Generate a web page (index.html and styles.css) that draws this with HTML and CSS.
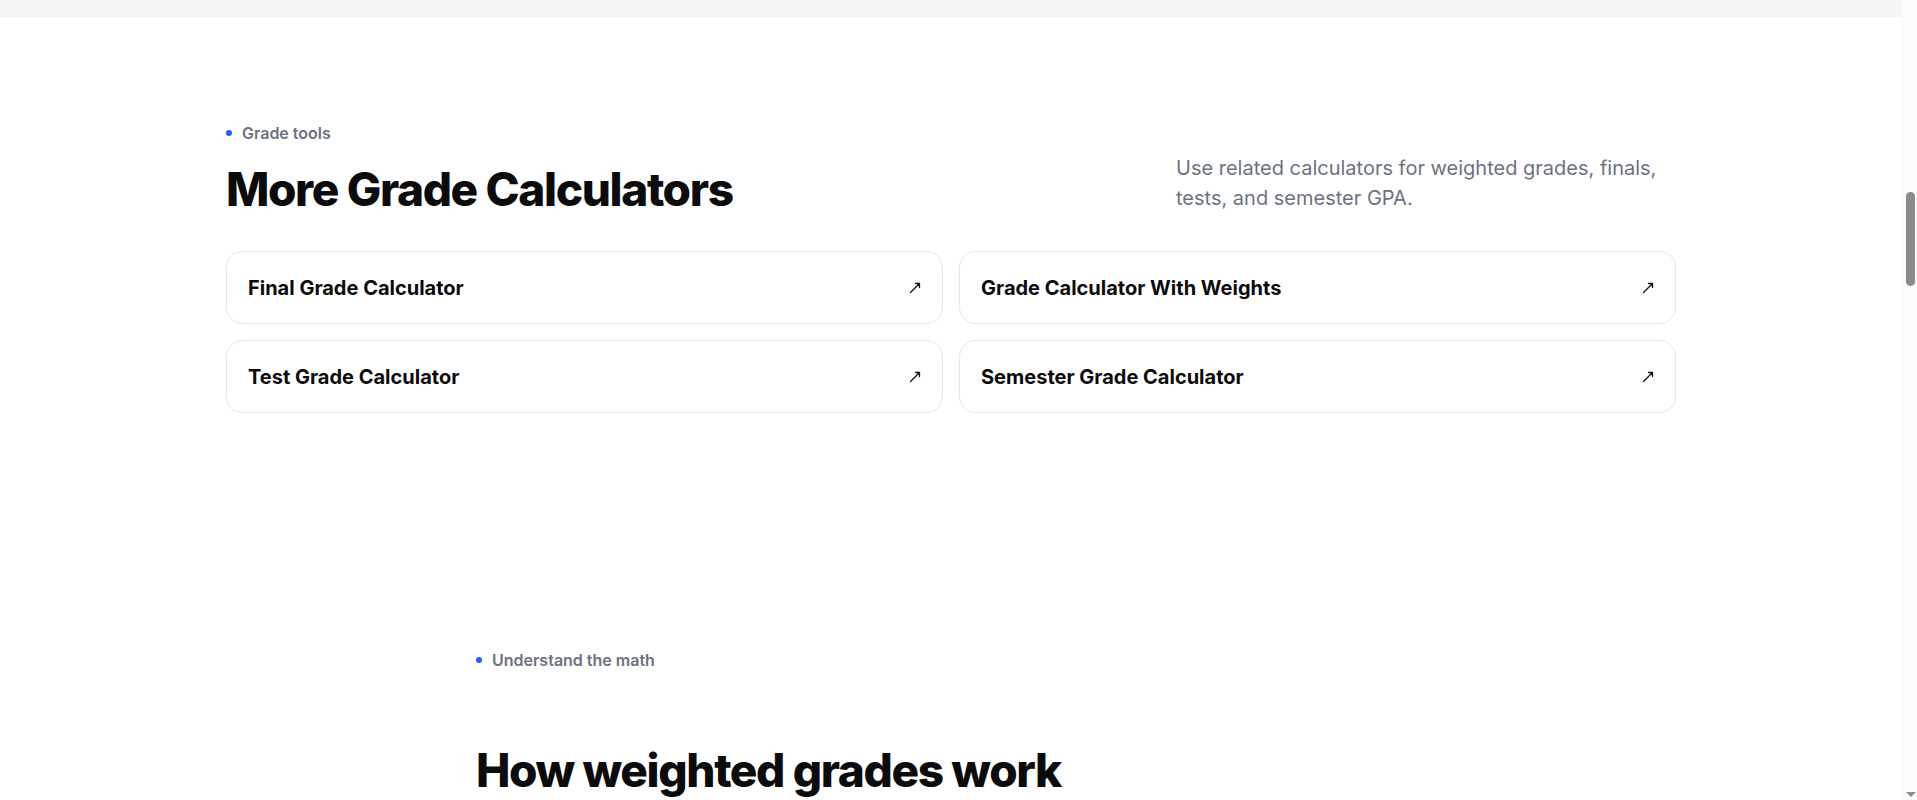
FILE: index.html
```html
<!DOCTYPE html>
<html lang="en">

<head>
    <meta charset="UTF-8">
    <meta name="viewport" content="width=device-width, initial-scale=1.0">
    <title>Weighted Grade Calculator</title>
    <link rel="stylesheet" href="styles.css">
</head>

<body>
    <div class="page">
        <!-- tail of the calculator panel above -->
        <div class="calc-tail"></div>

        <section class="tools">
            <div class="container">
                <div class="tools-head">
                    <div>
                        <div class="eyebrow">Grade tools</div>
                        <h2 class="section-title">More Grade Calculators</h2>
                    </div>
                    <p class="tools-intro">Use related calculators for weighted grades, finals, tests, and semester GPA.</p>
                </div>

                <div class="tool-grid">
                    <a class="tool-card" href="#">
                        <span>Final Grade Calculator</span>
                        <svg class="tool-arrow" viewBox="0 0 12 12"><path d="M1.5 10.5L10.5 1.5M6.5 1.5h4v4"/></svg>
                    </a>
                    <a class="tool-card" href="#">
                        <span>Grade Calculator With Weights</span>
                        <svg class="tool-arrow" viewBox="0 0 12 12"><path d="M1.5 10.5L10.5 1.5M6.5 1.5h4v4"/></svg>
                    </a>
                    <a class="tool-card" href="#">
                        <span>Test Grade Calculator</span>
                        <svg class="tool-arrow" viewBox="0 0 12 12"><path d="M1.5 10.5L10.5 1.5M6.5 1.5h4v4"/></svg>
                    </a>
                    <a class="tool-card" href="#">
                        <span>Semester Grade Calculator</span>
                        <svg class="tool-arrow" viewBox="0 0 12 12"><path d="M1.5 10.5L10.5 1.5M6.5 1.5h4v4"/></svg>
                    </a>
                </div>
            </div>
        </section>

        <section class="explainer">
            <div class="container narrow">
                <div class="eyebrow">Understand the math</div>
                <h2 class="section-title explainer-title">How weighted grades work</h2>
            </div>
        </section>
    </div>

    <!-- window scrollbar -->
    <div class="scroll-rail">
        <div class="scroll-thumb"></div>
        <div class="scroll-down"></div>
    </div>
</body>

</html>
```

FILE: styles.css
```css
body {
    margin: 0;
    padding: 0;
    display: flex;
    font-family: 'Inter', 'Liberation Sans', sans-serif;
    background-color: #ffffff;
    color: #0b0b0c;
}

.page {
    flex: 1;
    min-width: 0;
}

.calc-tail {
    height: 17px;
    background-color: #f5f5f5;
}

.container {
    max-width: 1450px;
    margin: 0 auto;
}

.container.narrow {
    max-width: 950px;
}

.tools {
    padding: 106px 0 120px;
}

.eyebrow {
    display: flex;
    align-items: center;
    gap: 10px;
    font-size: 16px;
    line-height: 20px;
    font-weight: 600;
    color: #6b7280;
}

.eyebrow::before {
    content: '';
    width: 6px;
    height: 6px;
    border-radius: 50%;
    background-color: #1f5ef5;
}

.section-title {
    margin: 21px 0 0;
    font-size: 46px;
    line-height: 1.1;
    font-weight: 800;
    letter-spacing: -0.03em;
    color: #0b0b0c;
}

.tools-head {
    display: flex;
    justify-content: space-between;
    align-items: flex-end;
}

.tools-intro {
    max-width: 500px;
    margin: 0 0 2px;
    font-size: 20px;
    line-height: 30px;
    color: #6b7280;
}

.tool-grid {
    display: grid;
    grid-template-columns: 1fr 1fr;
    gap: 16px;
    margin-top: 36px;
}

.tool-card {
    display: flex;
    align-items: center;
    justify-content: space-between;
    box-sizing: border-box;
    height: 73px;
    padding: 1px 21px 0;
    border: 1px solid #e5e7eb;
    border-radius: 16px;
    background-color: #ffffff;
    color: #0b0b0c;
    font-size: 20px;
    font-weight: 700;
    text-decoration: none;
}

.tool-arrow {
    width: 12px;
    height: 12px;
    fill: none;
    stroke: #111111;
    stroke-width: 1.3;
    stroke-linecap: round;
}

.explainer {
    padding-top: 117px;
}

.explainer-title {
    margin-top: 75px;
}

.scroll-rail {
    flex: none;
    width: 15px;
    height: 100vh;
    display: flex;
    flex-direction: column;
    align-items: center;
    padding-bottom: 3px;
    box-sizing: border-box;
    background-color: #fbfbfb;
}

.scroll-thumb {
    width: 9px;
    height: 94px;
    margin-top: 192px;
    margin-left: 2px;
    border-radius: 5px;
    background-color: #8b8b8b;
}

.scroll-down {
    width: 0;
    height: 0;
    margin-top: auto;
    margin-left: 2px;
    border-left: 5px solid transparent;
    border-right: 5px solid transparent;
    border-top: 5px solid #8b8b8b;
}
```
